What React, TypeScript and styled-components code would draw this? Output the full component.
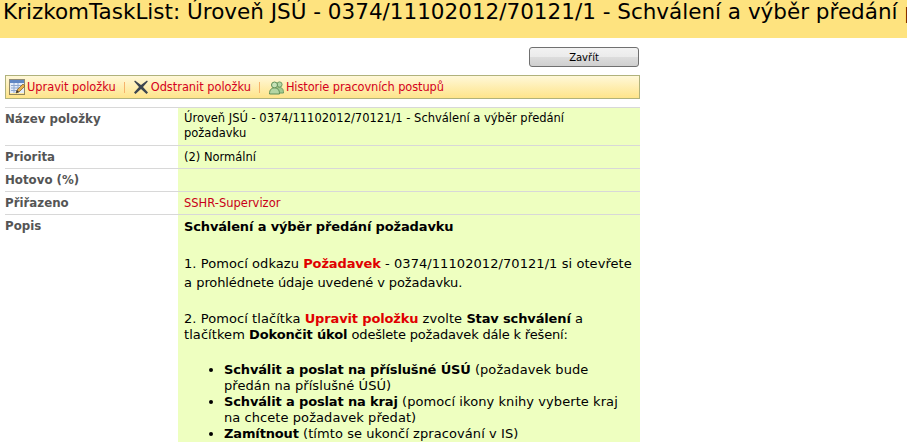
import React from "react";
import styled, { createGlobalStyle } from "styled-components";

const GlobalStyle = createGlobalStyle`
  html, body {
    margin: 0;
    padding: 0;
    background: #fff;
    overflow: hidden;
  }
  body {
    font-family: "DejaVu Sans", Verdana, sans-serif;
    font-size: 11px;
    color: #000;
  }
`;

const Page = styled.div`
  width: 907px;
  height: 443px;
  overflow: hidden;
`;

const TitleBar = styled.div`
  height: 38px;
  background: #fee37f;
  padding-left: 3px;
  font-size: 21.5px;
  line-height: 24px;
  white-space: nowrap;
  overflow: hidden;
`;

const Content = styled.div`
  width: 635px;
  margin-left: 5px;
`;

const ButtonRow = styled.div`
  display: flex;
  justify-content: flex-end;
  padding: 9px 1px 8px 0;
`;

const CloseButton = styled.button`
  width: 110px;
  height: 20px;
  padding: 0;
  border: 1px solid #707070;
  border-radius: 3px;
  background: linear-gradient(#f2f2f2 0, #ebebeb 48%, #dddddd 50%, #cfcfcf 100%);
  font: 10px "DejaVu Sans", Verdana, sans-serif;
  color: #000;
`;

const Toolbar = styled.div`
  height: 22px;
  display: flex;
  align-items: center;
  padding-left: 3px;
  border: 1px solid #b0b27c;
  background: linear-gradient(#fff8d8 0, #fee48a 100%);
`;

const Action = styled.a<{ $gap: number }>`
  display: flex;
  align-items: center;
  gap: ${(p) => p.$gap}px;
  color: #d40021;
  font-size: 11.4px;
  letter-spacing: -0.02px;
  text-decoration: none;
`;

const Divider = styled.span`
  width: 1px;
  height: 11px;
  margin: 0 9px 0 8px;
  background: #f6b26b;
`;

const Details = styled.div`
  margin-top: 8px;
  border-top: 1px solid #d8d8d8;
`;

const Row = styled.div`
  display: grid;
  grid-template-columns: 173px 1fr;
  border-bottom: 1px solid #d8d8d8;
`;

const Label = styled.div`
  padding: 4px 0 0 0;
  font-weight: bold;
  font-size: 11.8px;
  line-height: 14px;
  color: #555;
`;

const Value = styled.div<{ $height: number; $top: number }>`
  min-height: ${(p) => p.$height}px;
  box-sizing: border-box;
  padding: ${(p) => p.$top}px 20px 0 6px;
  background: #eeffc0;
  font-size: 11.5px;
  line-height: 15px;
`;

const Person = styled.span`
  color: #c80018;
`;

const LastRow = styled(Row)`
  border-bottom: none;
`;

const Body = styled.div`
  padding: 4px 6px 0 6px;
  background: #eeffc0;
  font-size: 13px;
  line-height: 16px;
  letter-spacing: 0.07px;

  b {
    letter-spacing: -0.14px;
  }
`;

const Paragraph = styled.p`
  margin: 0 0 19px 0;
`;

const Tall = styled.span`
  display: block;
  line-height: 19px;
`;

const Alert = styled.b`
  color: #e00000;
`;

const Tight = styled.span<{ $by: number }>`
  letter-spacing: ${(p) => p.$by}px;
`;

const List = styled.ul`
  margin: 0;
  padding-left: 40px;
`;

const EditIcon = () => (
  <svg width="16" height="16" viewBox="0 0 16 16">
    <rect x="0.5" y="0.5" width="15" height="15" fill="none" stroke="#222" strokeDasharray="1 1" />
    <rect x="1" y="1" width="14" height="3" fill="#5f86c4" />
    <rect x="1" y="4" width="14" height="10" fill="#e4ecf8" />
    <path d="M2 6.500h11M2 9h8M2 11.500h6M5 4v10M9 4v6" stroke="#8fa8cf" strokeWidth="1" />
    <path d="M7 14l1-3 6-6 2 2-6 6z" fill="#e8b04c" stroke="#7a5a20" strokeWidth="0.7" />
    <path d="M7 14l1-3 2 2z" fill="#333" />
  </svg>
);

const DeleteIcon = () => (
  <svg width="14" height="14" viewBox="0 0 14 14">
    <path d="M1 0.500L7 5l6-4.500 .8 1L9 7l5 5.500-1.500 1.500L7 9l-5.500 5L0 12.500 5 7 .2 1.500z" fill="#3d4650" />
  </svg>
);

const HistoryIcon = () => (
  <svg width="15" height="15" viewBox="0 0 15 15">
    <circle cx="10.500" cy="4.500" r="2.600" fill="#b3d6a4" stroke="#6d9a62" />
    <path d="M6 13c0-4 2-5.500 4.500-5.500S14.500 9 14.500 13z" fill="#a3cb92" stroke="#6d9a62" />
    <circle cx="5.500" cy="5" r="3" fill="#c6e2b8" stroke="#5f8f56" />
    <path d="M.5 14c0-4.500 2-6 5-6s5 1.500 5 6z" fill="#b3d6a4" stroke="#5f8f56" />
  </svg>
);

export default function App() {
  return (
    <Page>
      <GlobalStyle />
      <TitleBar>KrizkomTaskList: Úroveň JSÚ - 0374/11102012/70121/1 - Schválení a výběr předání požadavku</TitleBar>
      <Content>
        <ButtonRow>
          <CloseButton>Zavřít</CloseButton>
        </ButtonRow>
        <Toolbar>
          <Action $gap={2}><EditIcon />Upravit položku</Action>
          <Divider />
          <Action $gap={3}><DeleteIcon />Odstranit položku</Action>
          <Divider />
          <Action $gap={2}><HistoryIcon /><Tight $by={-0.08}>Historie pracovních postupů</Tight></Action>
        </Toolbar>
        <Details>
          <Row>
            <Label>Název položky</Label>
            <Value $height={37} $top={3}>Úroveň JSÚ - 0374/11102012/70121/1 - Schválení a výběr předání požadavku</Value>
          </Row>
          <Row>
            <Label>Priorita</Label>
            <Value $height={22} $top={4}>(2) Normální</Value>
          </Row>
          <Row>
            <Label>Hotovo (%)</Label>
            <Value $height={22} $top={4} />
          </Row>
          <Row>
            <Label>Přiřazeno</Label>
            <Value $height={22} $top={4}><Person>SSHR-Supervizor</Person></Value>
          </Row>
          <LastRow>
            <Label>Popis</Label>
            <Body>
              <Paragraph><b>Schválení a výběr předání požadavku</b></Paragraph>
              <Paragraph>
                <Tall>1. Pomocí odkazu <Alert>Požadavek</Alert> - 0374/11102012/70121/1 si otevřete a <Tight $by={-0.1}>prohlédnete údaje uvedené v požadavku.</Tight></Tall>
              </Paragraph>
              <Paragraph>
                2. Pomocí tlačítka <Alert>Upravit položku</Alert> zvolte <b>Stav schválení</b> a tlačítkem <b>Dokončit úkol</b> <Tight $by={-0.18}>odešlete požadavek dále k řešení:</Tight>
              </Paragraph>
              <List>
                <li><b>Schválit a poslat na příslušné ÚSÚ</b> (požadavek bude předán na příslušné ÚSÚ)</li>
                <li><b>Schválit a poslat na kraj</b> (pomocí ikony knihy vyberte kraj na chcete požadavek předat)</li>
                <li><b>Zamítnout</b> (tímto se ukončí zpracování v IS)</li>
              </List>
            </Body>
          </LastRow>
        </Details>
      </Content>
    </Page>
  );
}
